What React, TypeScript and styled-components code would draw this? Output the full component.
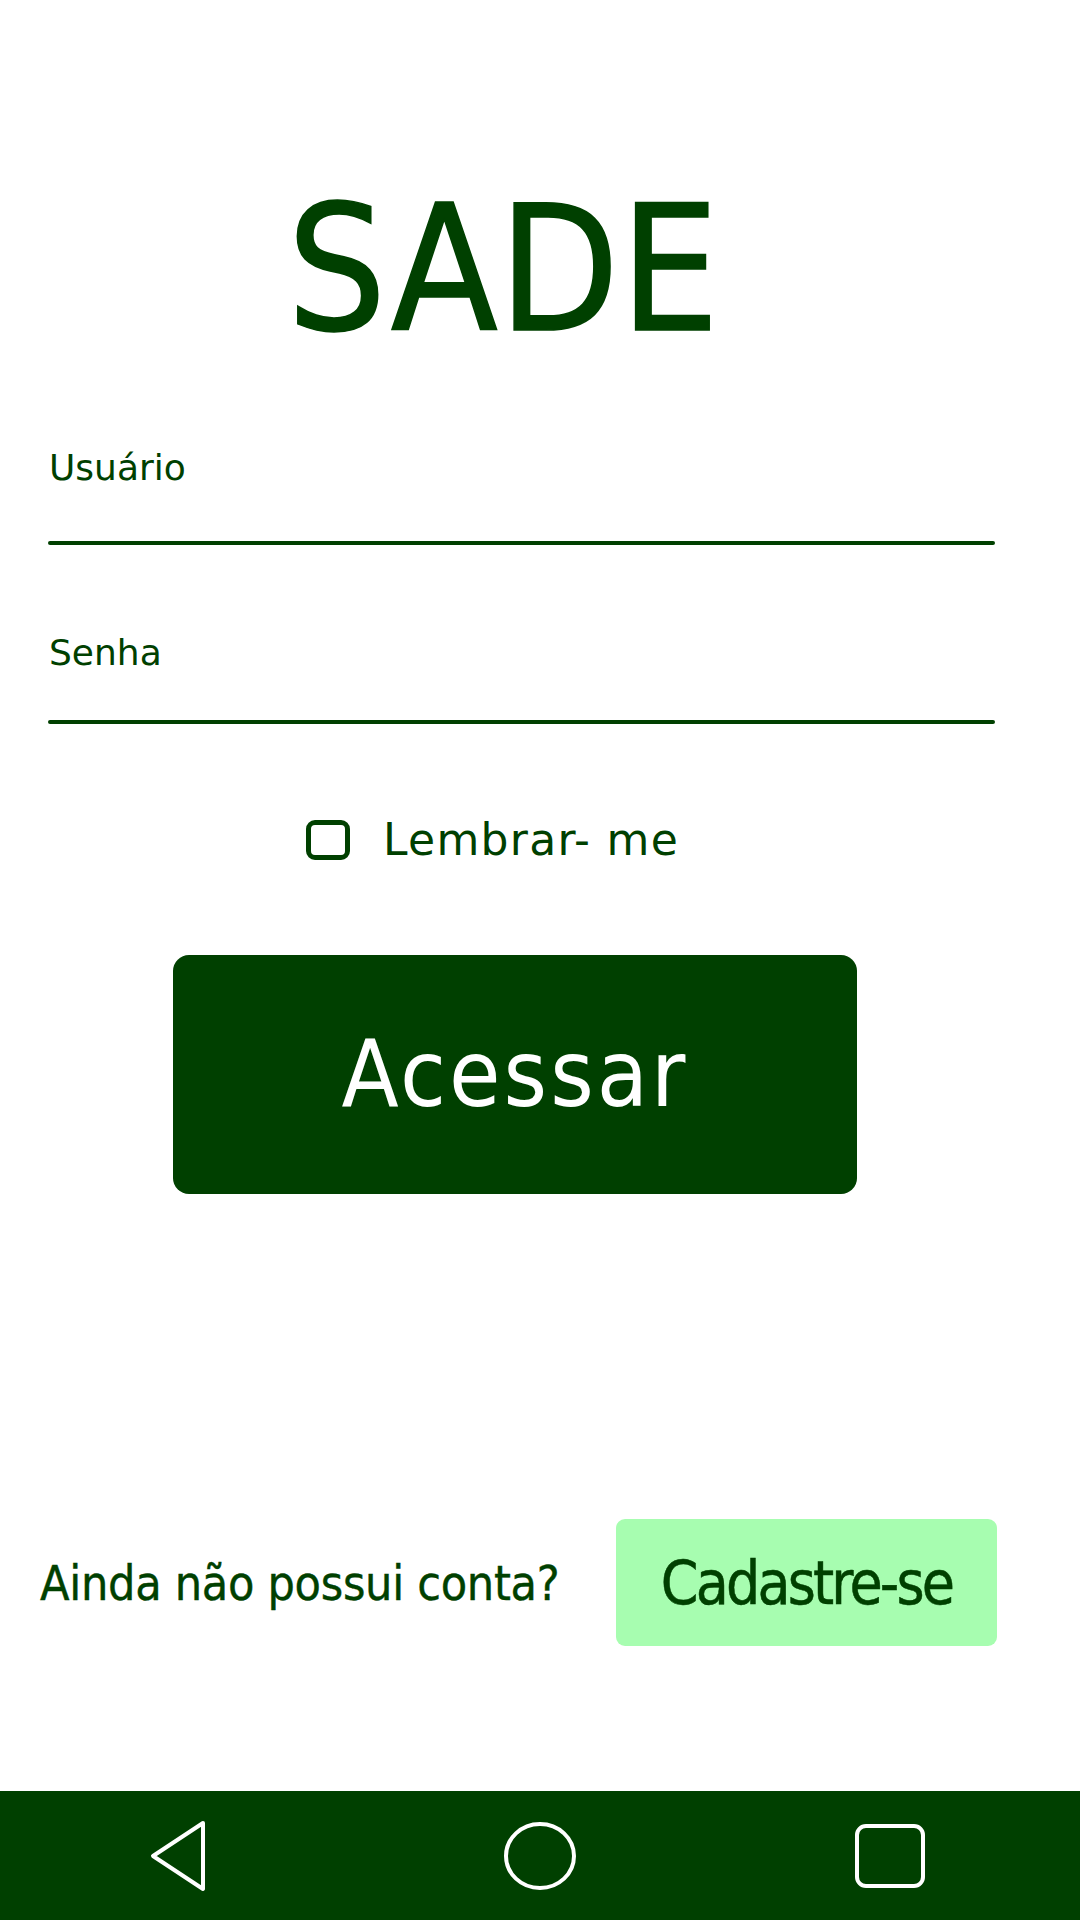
import React from "react";
import styled, { createGlobalStyle } from "styled-components";

const GREEN = "#004000";
const LIGHT = "#a7fdb0";

const Global = createGlobalStyle`
  html, body { margin: 0; padding: 0; background: #ffffff; }
  body { font-family: "DejaVu Sans", sans-serif; }
  * { box-sizing: border-box; }
`;

const Screen = styled.div`
  width: 1080px;
  min-height: 1920px;
  display: flex;
  flex-direction: column;
  background: #ffffff;
`;

const Content = styled.main`
  display: flex;
  flex-direction: column;
  align-items: flex-start;
`;

const Title = styled.h1`
  margin: 183px 0 0 287px;
  height: 179px;
  font-family: "DejaVu Sans Condensed", "DejaVu Sans", sans-serif;
  font-weight: 400;
  font-size: 174px;
  line-height: 1;
  letter-spacing: 1px;
  color: ${GREEN};
  -webkit-text-stroke: 1.5px ${GREEN};
`;

const Field = styled.label<{ $top: number; $gap: number }>`
  display: flex;
  flex-direction: column;
  width: 947px;
  margin: ${(p) => p.$top}px 0 0 48px;
  gap: ${(p) => p.$gap}px;
`;

const FieldLabel = styled.span`
  font-family: "DejaVu Sans", sans-serif;
  font-size: 36px;
  line-height: 1;
  color: ${GREEN};
  padding-left: 1px;
`;

const Underline = styled.div`
  height: 4px;
  border-radius: 2px;
  background: ${GREEN};
`;

const RememberRow = styled.label`
  display: flex;
  align-items: center;
  gap: 33px;
  margin: 94px 0 0 306px;
  height: 44px;
`;

const CheckBox = styled.span`
  width: 44px;
  height: 40px;
  border: 5px solid ${GREEN};
  border-radius: 9px;
`;

const RememberText = styled.span`
  font-family: "DejaVu Sans", sans-serif;
  font-size: 44px;
  line-height: 1;
  letter-spacing: 1.3px;
  color: ${GREEN};
`;

const PrimaryButton = styled.button`
  display: flex;
  align-items: center;
  justify-content: center;
  width: 684px;
  height: 239px;
  margin: 93px 0 0 173px;
  border: none;
  border-radius: 16px;
  background: ${GREEN};
  color: #ffffff;
  font-family: "DejaVu Sans Condensed", "DejaVu Sans", sans-serif;
  font-size: 93px;
  line-height: 1;
  letter-spacing: 3px;
  padding: 0;
`;

const SignupRow = styled.div`
  display: flex;
  align-items: center;
  margin: 325px 0 0 40px;
`;

const SignupText = styled.span`
  font-family: "DejaVu Sans Condensed", "DejaVu Sans", sans-serif;
  font-size: 48px;
  line-height: 1;
  letter-spacing: -0.3px;
  color: ${GREEN};
  width: 576px;
  -webkit-text-stroke: 0.4px ${GREEN};
`;

const SecondaryButton = styled.button`
  display: flex;
  align-items: center;
  justify-content: center;
  width: 381px;
  height: 127px;
  border: none;
  border-radius: 9px;
  background: ${LIGHT};
  color: ${GREEN};
  font-family: "DejaVu Sans Condensed", "DejaVu Sans", sans-serif;
  font-size: 60px;
  line-height: 1;
  letter-spacing: -2.8px;
  padding: 0;
  -webkit-text-stroke: 0.5px ${GREEN};
`;

const NavBar = styled.nav`
  margin-top: auto;
  height: 129px;
  background: ${GREEN};
  display: flex;
  align-items: center;
  padding-left: 150px;
`;

const NavIcon = styled.svg<{ $left: number }>`
  display: block;
  margin-left: ${(p) => p.$left}px;
  overflow: visible;
`;

export default function App() {
  return (
    <Screen>
      <Global />
      <Content>
        <Title>SADE</Title>
        <Field $top={88} $gap={55}>
          <FieldLabel>Usuário</FieldLabel>
          <Underline />
        </Field>
        <Field $top={90} $gap={49}>
          <FieldLabel>Senha</FieldLabel>
          <Underline />
        </Field>
        <RememberRow>
          <CheckBox />
          <RememberText>Lembrar- me</RememberText>
        </RememberRow>
        <PrimaryButton>Acessar</PrimaryButton>
        <SignupRow>
          <SignupText>Ainda não possui conta?</SignupText>
          <SecondaryButton>Cadastre-se</SecondaryButton>
        </SignupRow>
      </Content>
      <NavBar>
        <NavIcon $left={0} width="56" height="72" viewBox="0 0 56 72">
          <path
            d="M53 3 L3 36 L53 69 Z"
            fill="none"
            stroke="#fff"
            strokeWidth="4"
            strokeLinejoin="round"
          />
        </NavIcon>
        <NavIcon $left={296} width="76" height="72" viewBox="0 0 76 72">
          <ellipse cx="38" cy="36" rx="34" ry="32" fill="none" stroke="#fff" strokeWidth="4" />
        </NavIcon>
        <NavIcon $left={276} width="72" height="66" viewBox="0 0 72 66">
          <rect x="3" y="3" width="66" height="60" rx="9" fill="none" stroke="#fff" strokeWidth="4" />
        </NavIcon>
      </NavBar>
    </Screen>
  );
}
